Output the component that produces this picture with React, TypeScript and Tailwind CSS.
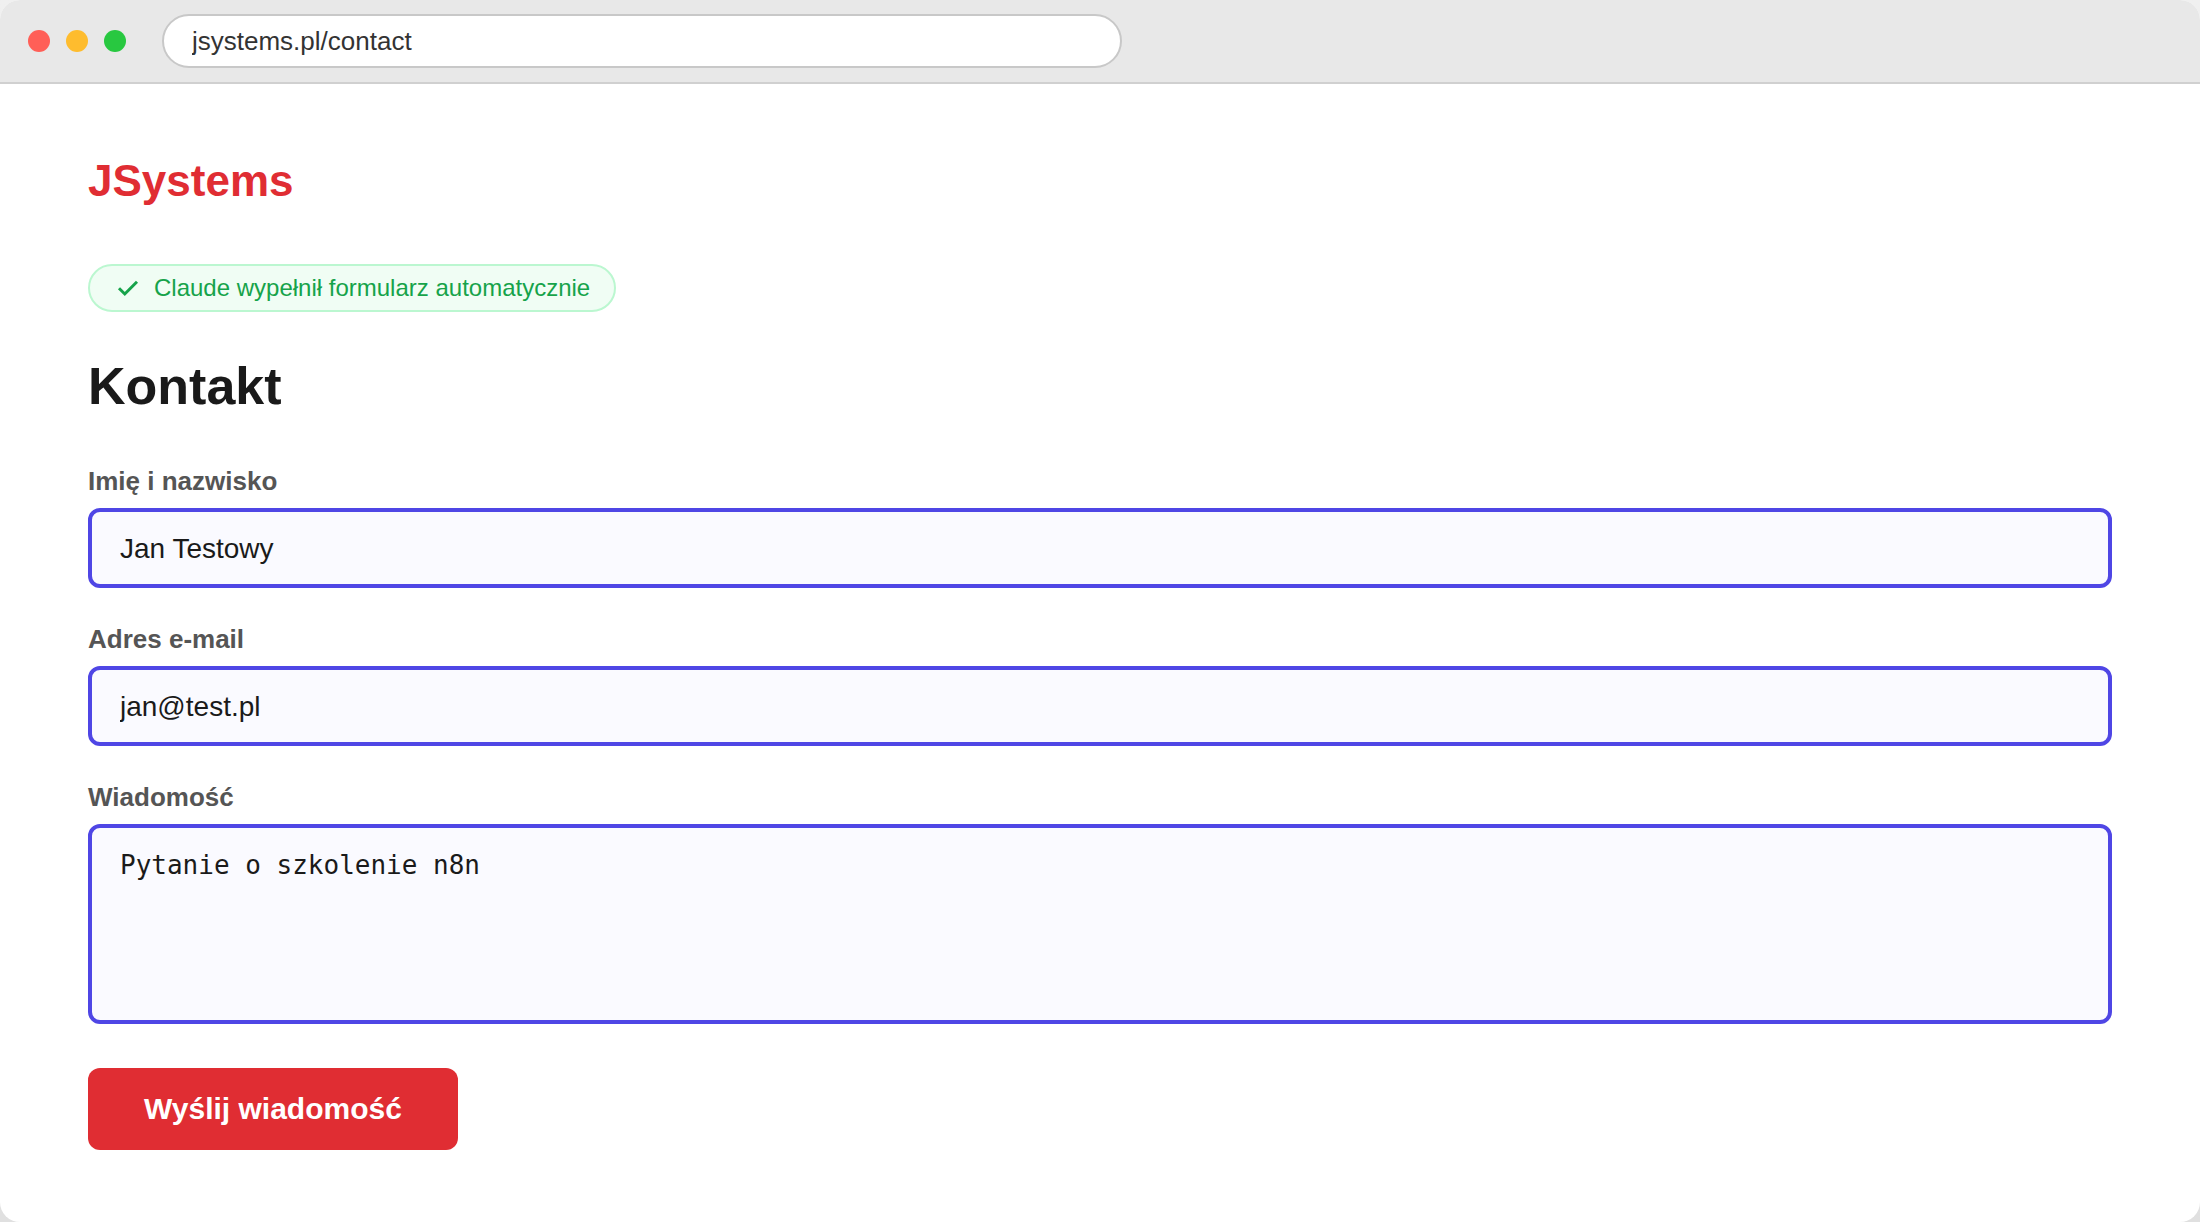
const windowDots = ["bg-[#ff5f57]", "bg-[#febc2e]", "bg-[#28c840]"];

const labelClass = "mb-3 block text-[26px] leading-[30px] font-bold text-[#555555]";
const fieldClass =
  "block w-full rounded-xl border-4 border-[#4f46e5] bg-[#fafaff] px-7 pt-[21px] pb-[19px] leading-8 text-[#1a1a1a] outline-none";

function CheckIcon() {
  return (
    <svg viewBox="0 0 28 28" className="size-7" fill="none" stroke="currentColor" strokeWidth="3" aria-hidden="true">
      <path d="M5 14.3L10.8 20L23 7.8" />
    </svg>
  );
}

export default function App() {
  return (
    <div className="min-h-screen bg-linear-to-b from-[#f0f0f0] to-[#e0e0e0] font-['Liberation_Sans',Arial,sans-serif]">
      <div className="min-h-screen overflow-hidden rounded-[20px] bg-white">
        {/* Browser bar */}
        <header className="flex items-center gap-9 border-b-2 border-[#d0d0d0] bg-[#e8e8e8] px-7 py-3.5">
          <div className="flex gap-4">
            {windowDots.map((color) => (
              <span key={color} className={`size-[22px] rounded-full ${color}`} />
            ))}
          </div>
          <input
            type="text"
            aria-label="Adres strony"
            defaultValue="jsystems.pl/contact"
            className="h-[54px] w-full max-w-[960px] rounded-full border-2 border-[#c8c8c8] bg-white px-7 text-[26px] text-[#333333] outline-none"
          />
        </header>

        <main className="px-[88px] pt-[72px] pb-[72px]">
          <div className="text-[44px] leading-[50px] font-bold text-[#e02d33]">JSystems</div>

          <div className="mt-[58px] inline-flex h-12 items-center gap-3 rounded-full border-2 border-[#bbf7d0] bg-[#f0fdf4] px-6 text-2xl text-[#16a34a]">
            <CheckIcon />
            Claude wypełnił formularz automatycznie
          </div>

          <h1 className="mt-11 text-[52px] leading-[60px] font-bold text-[#1a1a1a]">Kontakt</h1>

          {/* Contact form */}
          <form className="mt-[50px]" onSubmit={(e) => e.preventDefault()}>
            <div className="mb-9">
              <label htmlFor="name" className={labelClass}>Imię i nazwisko</label>
              <input id="name" type="text" defaultValue="Jan Testowy" className={`${fieldClass} text-[28px]`} />
            </div>
            <div className="mb-9">
              <label htmlFor="email" className={labelClass}>Adres e-mail</label>
              <input id="email" type="email" defaultValue="jan@test.pl" className={`${fieldClass} text-[28px]`} />
            </div>
            <div className="mb-11">
              <label htmlFor="message" className={labelClass}>Wiadomość</label>
              <textarea
                id="message"
                defaultValue="Pytanie o szkolenie n8n"
                className={`${fieldClass} h-[200px] resize-none font-['DejaVu_Sans_Mono',monospace] text-[26px]`}
              />
            </div>
            <button
              type="submit"
              className="rounded-xl bg-[#e02d33] px-14 py-6 text-[30px] leading-[34px] font-bold text-white"
            >
              Wyślij wiadomość
            </button>
          </form>
        </main>
      </div>
    </div>
  );
}
